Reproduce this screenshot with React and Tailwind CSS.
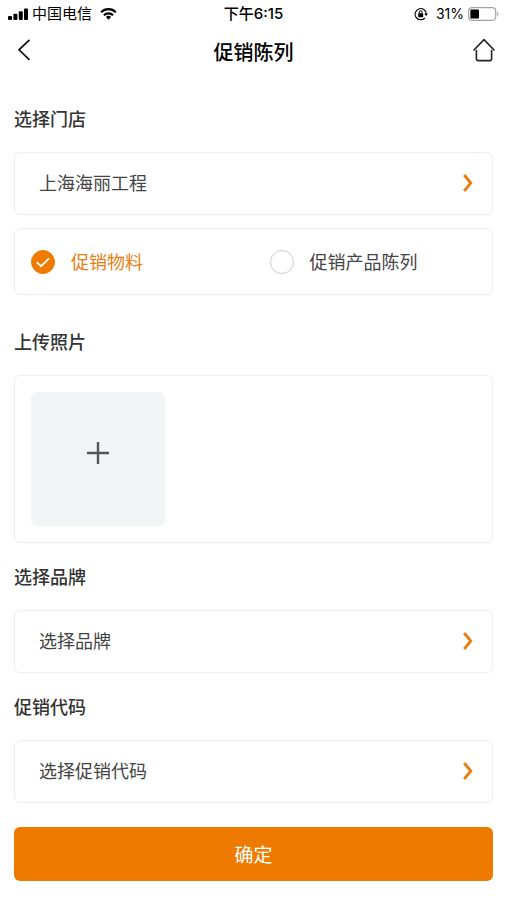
import { useState } from "react";

const StatusBar = () => (
  <div className="grid h-7 grid-cols-[1fr_auto_1fr] items-center px-2 font-[Inter,'Noto_Sans_CJK_SC',sans-serif] text-[15px] leading-5 text-black">
    <div className="flex items-center gap-1">
      <svg width="20" height="12" viewBox="0 0 20 12" fill="currentColor">
        <rect x="0" y="8" width="4" height="4" rx="1" />
        <rect x="5.4" y="5.8" width="4" height="6.2" rx="1" />
        <rect x="10.8" y="3.2" width="4" height="8.8" rx="1" />
        <rect x="16" y="0.5" width="4" height="11.5" rx="1" />
      </svg>
      <span>中国电信</span>
      <svg
        className="ml-1"
        width="17"
        height="12"
        viewBox="0 0 18 13"
        fill="none"
        stroke="currentColor"
        strokeWidth="2.4"
      >
        <path d="M1 4.6a11.4 11.4 0 0 1 16 0" />
        <path d="M4 7.8a7.2 7.2 0 0 1 10 0" />
        <path d="M9 12.6 6.2 9.8a4 4 0 0 1 5.6 0z" fill="currentColor" stroke="none" />
      </svg>
    </div>
    <span className="font-medium">下午6:15</span>
    <div className="flex items-center justify-end gap-1">
      <svg
        className="mr-1"
        width="14"
        height="14"
        viewBox="0 0 14 14"
        fill="none"
        stroke="currentColor"
      >
        <path d="M11 10.8a5.6 5.6 0 1 1 1.3-4" strokeWidth="1.1" />
        <path d="M10.2 6.4h3.8l-1.9 2.6z" fill="currentColor" stroke="none" />
        <rect x="4.2" y="6.2" width="5" height="4" rx="0.6" fill="currentColor" stroke="none" />
        <path d="M5.2 6.4V5.2a1.5 1.5 0 0 1 3 0v1.2" strokeWidth="1" />
      </svg>
      <span className="text-[14px]">31%</span>
      <svg width="31" height="14" viewBox="0 0 31 14" fill="none">
        <rect x="0.7" y="0.7" width="27" height="12.6" rx="3.5" stroke="#a3a3a3" strokeWidth="1.2" />
        <rect x="2.4" y="2.4" width="8.6" height="9.2" rx="1" fill="#000" />
        <path d="M29.2 4.8c1.6.5 1.6 3.9 0 4.4z" fill="#a3a3a3" />
      </svg>
    </div>
  </div>
);

const NavBar = () => (
  <header className="grid h-12 grid-cols-[1fr_auto_1fr] items-center px-3">
    <button type="button" aria-label="返回" className="justify-self-start px-1 pb-1">
      <svg width="16" height="22" viewBox="0 0 16 22" fill="none" stroke="#111" strokeWidth="1.7">
        <path d="M13.5 0.8 3 10.8l10.5 10" />
      </svg>
    </button>
    <h1 className="text-[20px] font-medium leading-7 text-black">促销陈列</h1>
    <button type="button" aria-label="首页" className="justify-self-end pb-1">
      <svg
        width="22"
        height="24"
        viewBox="0 0 22 24"
        fill="none"
        stroke="#222"
        strokeWidth="1.6"
        strokeLinecap="round"
        strokeLinejoin="round"
      >
        <path d="M1 12 11 1.6 21 12" />
        <path d="M3.4 12.6v8.2a1.8 1.8 0 0 0 1.8 1.8h11.6a1.8 1.8 0 0 0 1.8-1.8v-8.2" />
      </svg>
    </button>
  </header>
);

const titleStyle = "block text-[18px] font-medium leading-7 text-[#333]";

const Picker = ({ id, options }) => {
  const [value, setValue] = useState(options[0]);

  return (
    <div className="relative mt-5">
      <select
        id={id}
        value={value}
        onChange={(e) => setValue(e.target.value)}
        className="block h-[63px] w-full appearance-none rounded-md border border-[#eee] bg-white px-6 pb-0.5 text-[18px] text-[#444] outline-none"
      >
        {options.map((item) => (
          <option key={item}>{item}</option>
        ))}
      </select>
      <svg
        className="pointer-events-none absolute inset-y-0 right-5 my-auto pb-0.5"
        width="10"
        height="20"
        viewBox="0 0 10 18"
        fill="none"
        stroke="#e87d10"
        strokeWidth="2.8"
      >
        <path d="M1.2 1 7.8 9l-6.6 8" />
      </svg>
    </div>
  );
};

const types = ["促销物料", "促销产品陈列"];

export default function App() {
  const [type, setType] = useState(types[0]);

  return (
    <div className="min-h-screen bg-white font-['Noto_Sans_CJK_SC',sans-serif]">
      <StatusBar />
      <NavBar />
      <form
        className="px-[14px] pb-5 pt-7"
        onSubmit={(e) => e.preventDefault()}
      >
        <label htmlFor="store" className={titleStyle}>
          选择门店
        </label>
        <Picker id="store" options={["上海海丽工程"]} />

        <div className="mt-[13px] grid h-[67px] grid-cols-2 rounded-md border border-[#eee]">
          {types.map((item) => (
            <label
              key={item}
              className="flex items-center gap-4 pl-4 text-[18px] text-[#444] has-checked:text-[#e87d10]"
            >
              <span className="relative block size-6">
                <input
                  type="radio"
                  name="type"
                  checked={type === item}
                  onChange={() => setType(item)}
                  className="block size-6 appearance-none rounded-full border border-[#ccc] checked:border-[#ee7b00] checked:bg-[#ee7b00]"
                />
                {type === item && (
                  <svg
                    className="pointer-events-none absolute inset-0"
                    width="24"
                    height="24"
                    viewBox="0 0 24 24"
                    fill="none"
                    stroke="#fff"
                    strokeWidth="1.8"
                    strokeLinecap="round"
                  >
                    <path d="m6.2 12.6 3.8 3.6 7.6-7.4" />
                  </svg>
                )}
              </span>
              {item}
            </label>
          ))}
        </div>

        <h2 className={`mt-8 ${titleStyle}`}>上传照片</h2>
        <div className="mt-5 rounded-md border border-[#eee] p-4">
          <button
            type="button"
            aria-label="上传照片"
            className="flex size-[134px] items-center justify-center rounded-md bg-[#f2f5f6] pb-3"
          >
            <svg width="22" height="22" viewBox="0 0 22 22" stroke="#555" strokeWidth="2.4">
              <path d="M11 0v22M0 11h22" />
            </svg>
          </button>
        </div>

        <label htmlFor="brand" className={`mt-[19px] ${titleStyle}`}>
          选择品牌
        </label>
        <Picker id="brand" options={["选择品牌"]} />

        <label htmlFor="code" className={`mt-[19px] ${titleStyle}`}>
          促销代码
        </label>
        <Picker id="code" options={["选择促销代码"]} />

        <button
          type="submit"
          className="mt-6 h-[54px] w-full rounded-md bg-[#ee7b00] text-[19px] text-white"
        >
          确定
        </button>
      </form>
    </div>
  );
}
